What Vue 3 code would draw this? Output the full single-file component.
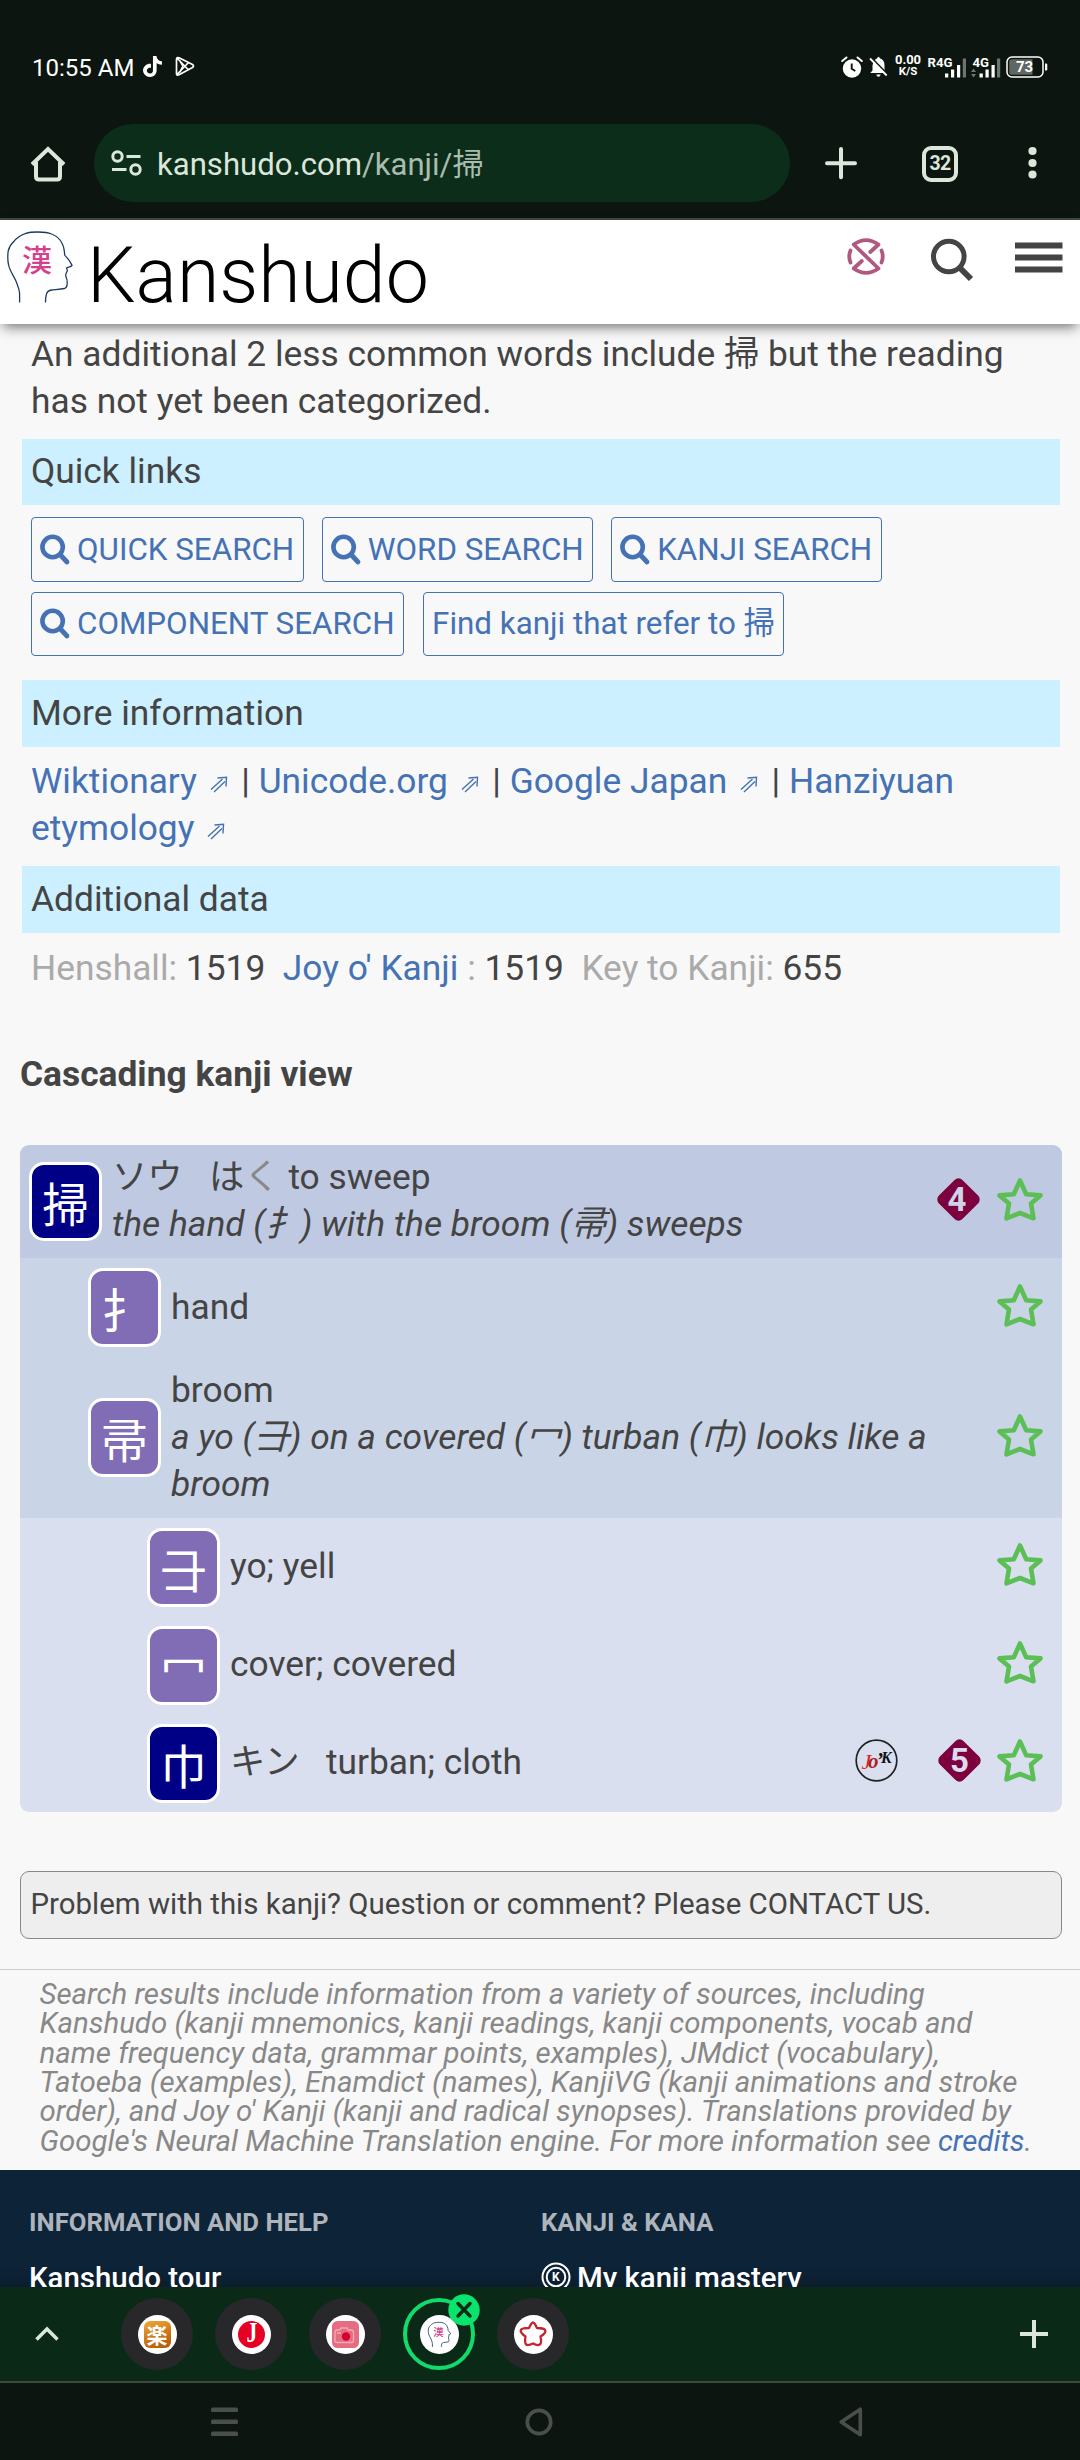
<script setup>
const searches = ['QUICK SEARCH', 'WORD SEARCH', 'KANJI SEARCH']
const refs = ['Wiktionary', 'Unicode.org', 'Google Japan']

const headPath =
  'M12.6 71.6V62C12 57 10 53 8.500 49C6 44 2.500 39 1.600 34C.4 29 .6 25 1.200 20C2.500 15 4 13 6.800 10.600C10 6 14 4 18.800 2.300C23 1 27 1 31 1C36 1 40 1 44.600 3C50 5 53 8 55 12.300C57 16 57.500 20 57.700 24C59 26 60.500 27 61.900 29C63 31 64 32 65 34.300C64 36 61 36 59.500 37C60 38 60.500 40 60 40.600C59 42 58.500 44 58.900 45.600C60 48 60.500 51 60 54C60 56 59 57 57.500 57.500C53 58.500 49 58.500 44.600 59C42 59.500 40 61 39.500 63C38.500 66 38.500 69 38.500 71.600'
const starPath =
  'M23 2.500L29.200 16.300L43.500 17.400L34 25.500L36.500 40.300L23 35L9.500 40.300L12 25.500L2.500 17.400L16.800 16.300Z'
</script>

<template>
  <div class="screen">
    <!-- system status bar -->
    <div class="status">
      <span class="clock">10:55 AM</span>
      <svg class="tiktok" width="19" height="21" viewBox="1.500 0 21 24" preserveAspectRatio="none"><path fill="#fff" d="M12.525.02c1.31-.02 2.61-.01 3.91-.02.08 1.53.63 3.09 1.75 4.17 1.12 1.11 2.7 1.62 4.24 1.79v4.03c-1.44-.05-2.89-.35-4.2-.97-.57-.26-1.1-.59-1.62-.93-.01 2.92.01 5.84-.02 8.75-.08 1.4-.54 2.79-1.35 3.94-1.31 1.92-3.58 3.17-5.91 3.21-1.43.08-2.86-.31-4.08-1.03-2.02-1.19-3.44-3.37-3.65-5.71-.02-.5-.03-1-.01-1.49.18-1.9 1.12-3.72 2.58-4.96 1.66-1.44 3.98-2.13 6.15-1.72.02 1.48-.04 2.96-.04 4.44-.99-.32-2.15-.23-3.02.37-.63.41-1.11 1.04-1.36 1.75-.21.51-.15 1.07-.14 1.61.24 1.64 1.82 3.02 3.5 2.87 1.12-.01 2.19-.66 2.77-1.61.19-.33.4-.67.41-1.06.1-1.79.06-3.57.07-5.36.01-4.03-.01-8.05.02-12.07z" /></svg>
      <svg class="play" width="20" height="21" viewBox="0 0 20 21" fill="none" stroke="#fff" stroke-width="1.700" stroke-linejoin="round"><path d="M1.500 3.500Q1.500 .8 4 1.800L17.500 8.500Q19.500 10 17.500 11.500L4 18.800Q1.500 19.800 1.500 17.500ZM2 2L13.500 14M2 18.500L13.500 6.500M8 10.200L5 5M8 10.200L5 16" /></svg>
      <span class="grow"></span>
      <svg width="22" height="22" viewBox="0 0 22 22"><circle cx="11" cy="12.500" r="9.200" fill="#fff" /><path d="M1.200 5L5.500 1.500M20.800 5L16.500 1.500" stroke="#fff" stroke-width="2" stroke-linecap="round" /><path d="M10.700 7.500V12.800L14.300 15" fill="none" stroke="#0c150f" stroke-width="1.900" /></svg>
      <svg class="bell" width="19" height="22" viewBox="0 0 19 22"><path d="M4.500 6Q6 2.800 8.300 2.200Q8.500 .7 9.500 .7T10.800 2.200Q15.500 3.500 15.500 9.500V14.500L17 17H1.200L3.500 14.500V9.500ZM7.300 18.500H11.700Q11.200 20.800 9.500 20.800T7.300 18.500" fill="#fff" /><path d="M2 1.500L18.500 18.500" stroke="#0c150f" stroke-width="2" /><path d="M1 2.500L17.700 19.500" stroke="#fff" stroke-width="1.800" /></svg>
      <span class="speed"><span>0.00</span><span class="unit">K/S</span></span>
      <svg class="sim1" width="39" height="22" viewBox="0 0 39 22"><text x="-.5" y="11" class="net">R4G</text><path fill="#fff" d="M17 17.500h3.300v4H17zM23 13.500h3.200v8H23zM29 9h3.200v12.500H29z" /><path fill="#6e746f" d="M34.800 2.500h3.200v19h-3.200z" /></svg>
      <svg class="sim2" width="30" height="22" viewBox="0 0 30 22"><text x="1.500" y="11" class="net">4G</text><path fill="#fff" d="M8.500 17.500h3.300v4H8.500zM14.500 13.500h3.200v8h-3.200zM20.500 9h3.200v12.500h-3.200z" /><path fill="#6e746f" d="M26 2.500h3.200v19H26zM0 16L2.500 12.500L5 16zM0 18L2.500 21.500L5 18z" /></svg>
      <svg class="battery" width="42" height="22" viewBox="0 0 42 22"><rect x="1" y="1" width="36" height="20" rx="5" fill="none" stroke="#fff" stroke-width="1.500" /><path d="M6 3.300h20.500v15.400H6q-2.800 0-2.800-2.800V6.100Q3.200 3.300 6 3.300" fill="#606661" /><path d="M39 7.500h1q1.300 0 1.300 1.300v4.400q0 1.300-1.300 1.300h-1z" fill="#fff" /><text x="10" y="16.200" class="pct">73</text></svg>
    </div>

    <!-- browser toolbar -->
    <div class="toolbar">
      <svg class="home" width="36" height="36" viewBox="0 0 36 36" fill="none" stroke="#dbe7da" stroke-width="4" stroke-linejoin="round"><path d="M2 18.500L18 3L34 18.500" stroke-linejoin="miter" /><path d="M6 16V30.500Q6 33.500 9 33.500H27Q30 33.500 30 30.500V16" /></svg>
      <div class="url">
        <svg width="31" height="26" viewBox="0 0 31 26" fill="none" stroke="#dbe7da" stroke-width="3"><circle cx="6.500" cy="6.500" r="4.700" /><circle cx="24.500" cy="19.500" r="4.700" /><path d="M15.500 6.500H29.500M1 19.500H15.500" /></svg>
        <span class="address">kanshudo.com<span class="path">/kanji/掃</span></span>
      </div>
      <svg class="new" width="32" height="32" viewBox="0 0 32 32" stroke="#dbe7da" stroke-width="4" stroke-linecap="round"><path d="M2 16.300H30M16 2V30.300" /></svg>
      <span class="count">32</span>
      <svg class="dots" width="9" height="34" viewBox="0 0 9 34" fill="#dbe7da"><circle cx="4.500" cy="5" r="4.100" /><circle cx="4.500" cy="17" r="4.100" /><circle cx="4.500" cy="28.500" r="4.100" /></svg>
    </div>

    <!-- web page -->
    <header class="site">
      <svg class="head" width="66" height="72" viewBox="0 0 66 72"><path :d="headPath" fill="none" stroke="#1f3a5f" stroke-width="1.300" /><text x="15" y="39.500" class="kan">漢</text></svg>
      <span class="brand">Kanshudo</span>
      <svg class="streak" width="38" height="37" viewBox="0 0 38 37" fill="none" stroke="#b0587f" stroke-width="3.800" stroke-linecap="round" stroke-linejoin="round"><path d="M23.300 14L31.500 6.500Q19-2.300 6.700 6.500L31.500 30.500Q19 39.300 6.700 30.500L14.800 23M3.500 12.500Q1 18.500 3.500 24.500M34.500 12.500Q37 18.500 34.500 24.500" /></svg>
      <svg class="find" width="43" height="44" viewBox="0 0 43 44" fill="none" stroke="#444"><circle cx="17.800" cy="18.500" r="15.300" stroke-width="5" /><path d="M29 30L40 41" stroke-width="6" /></svg>
      <svg class="burger" width="48" height="32" viewBox="0 0 48 32"><path d="M0 .5h47.500v6H0zM0 12.500h47.500v6H0zM0 24.500h47.500v6H0z" fill="#444" /></svg>
    </header>

    <main class="page">
      <p class="para">An additional 2 less common words include 掃 but the reading<br />has not yet been categorized.</p>

      <h3 class="band first">Quick links</h3>
      <div class="buttons">
        <a v-for="s in searches" :key="s" class="btn">
          <svg class="lens" width="30" height="31" viewBox="0 0 30 31" fill="none" stroke="#4472b5" stroke-linecap="round"><circle cx="12.600" cy="13" r="10.200" stroke-width="4.600" /><path d="M20.500 21L27 28" stroke-width="4.800" /></svg>{{ s }}
        </a>
      </div>
      <div class="buttons second">
        <a class="btn">
          <svg class="lens" width="30" height="31" viewBox="0 0 30 31" fill="none" stroke="#4472b5" stroke-linecap="round"><circle cx="12.600" cy="13" r="10.200" stroke-width="4.600" /><path d="M20.500 21L27 28" stroke-width="4.800" /></svg>COMPONENT SEARCH
        </a>
        <a class="btn">Find kanji that refer to 掃</a>
      </div>

      <h3 class="band more">More information</h3>
      <p class="para links"><template v-for="r in refs" :key="r"><a>{{ r }}<svg class="ext" width="18" height="17" viewBox="0 0 18 17" fill="none" stroke="#4472b5" stroke-width="1.400"><path d="M1 13.500L12.500 3M4 16L15 5.500M7.500 2L16.500 1.200L16 10.500" /></svg></a> | </template><a>Hanziyuan etymology<svg class="ext" width="18" height="17" viewBox="0 0 18 17" fill="none" stroke="#4472b5" stroke-width="1.400"><path d="M1 13.500L12.500 3M4 16L15 5.500M7.500 2L16.500 1.200L16 10.500" /></svg></a></p>

      <h3 class="band extra">Additional data</h3>
      <p class="para data"><i>Henshall:</i> 1519 &nbsp;<a>Joy o' Kanji</a> <i>:</i> 1519 &nbsp;<i>Key to Kanji:</i> 655</p>

      <h2 class="title">Cascading kanji view</h2>

      <section class="cascade">
        <div class="row l1">
          <span class="tile navy">掃</span>
          <div class="text">ソウ&nbsp;&nbsp; は<span class="okuri">く</span> to sweep<br /><em>the hand (扌) with the broom (帚) sweeps</em></div>
          <svg class="level" width="43" height="43" viewBox="0 0 43 43"><rect x="4.900" y="4.900" width="33.200" height="33.200" rx="5.500" transform="rotate(45 21.500 21.500)" fill="#7d003f" /><text x="20" y="33" text-anchor="middle" class="num n1">4</text></svg>
          <svg class="star" width="46" height="43" viewBox="0 0 46 43"><path :d="starPath" /></svg>
        </div>
        <div class="row l2">
          <span class="tile">扌</span>
          <div class="text">hand</div>
          <svg class="star" width="46" height="43" viewBox="0 0 46 43"><path :d="starPath" /></svg>
        </div>
        <div class="row l2 tall">
          <span class="tile">帚</span>
          <div class="text">broom<br /><em>a yo (⺕) on a covered (冖) turban (巾) looks like a<br />broom</em></div>
          <svg class="star" width="46" height="43" viewBox="0 0 46 43"><path :d="starPath" /></svg>
        </div>
        <div class="row l3">
          <span class="tile">⺕</span>
          <div class="text">yo; yell</div>
          <svg class="star" width="46" height="43" viewBox="0 0 46 43"><path :d="starPath" /></svg>
        </div>
        <div class="row l3">
          <span class="tile">冖</span>
          <div class="text">cover; covered</div>
          <svg class="star" width="46" height="43" viewBox="0 0 46 43"><path :d="starPath" /></svg>
        </div>
        <div class="row l3">
          <span class="tile navy">巾</span>
          <div class="text">キン&nbsp;&nbsp; turban; cloth</div>
          <svg class="jok" width="43" height="43" viewBox="0 0 43 43"><circle cx="21.500" cy="21.500" r="20.300" fill="none" stroke="#222" stroke-width="1.700" /><text x="6.500" y="30" class="j">J</text><text x="13" y="28.500" class="o">o</text><text x="21.500" y="28" class="a">’</text><text x="26" y="23.500" class="k">K</text></svg>
          <svg class="level" width="43" height="43" viewBox="0 0 43 43"><rect x="4.900" y="4.900" width="33.200" height="33.200" rx="5.500" transform="rotate(45 21.500 21.500)" fill="#7d003f" /><text x="21.500" y="33" text-anchor="middle" class="num n3">5</text></svg>
          <svg class="star" width="46" height="43" viewBox="0 0 46 43"><path :d="starPath" /></svg>
        </div>
      </section>

      <div class="contact">Problem with this kanji? Question or comment? Please CONTACT US.</div>

      <div class="credits">
        Search results include information from a variety of sources, including<br />
        Kanshudo (kanji mnemonics, kanji readings, kanji components, vocab and<br />
        name frequency data, grammar points, examples), JMdict (vocabulary),<br />
        Tatoeba (examples), Enamdict (names), KanjiVG (kanji animations and stroke<br />
        order), and Joy o' Kanji (kanji and radical synopses). Translations provided by<br />
        Google's Neural Machine Translation engine. For more information see <a>credits</a>.
      </div>
    </main>

    <footer class="foot">
      <div class="col"><h4>INFORMATION AND HELP</h4><a>Kanshudo tour</a></div>
      <div class="col"><h4>KANJI &amp; KANA</h4>
        <a><svg class="kring" width="30" height="30" viewBox="0 0 30 30" fill="none" stroke="#fff" stroke-width="2"><circle cx="15" cy="15" r="13.500" /><circle cx="15" cy="15" r="9.300" /><text x="11" y="19.300" class="kk">K</text></svg>My kanji mastery</a></div>
    </footer>

    <!-- tab group strip -->
    <div class="tabs">
      <svg class="chev" width="24" height="16" viewBox="0 0 24 16" fill="none" stroke="#dbe7da" stroke-width="3.500"><path d="M1.500 13.500L12 3L22.500 13.500" /></svg>
      <span class="tab"><span class="fav"><span class="raku">楽</span></span></span>
      <span class="tab"><span class="fav"><svg width="27" height="27" viewBox="0 0 27 27"><circle cx="13.500" cy="13.500" r="13.500" fill="#e60023" /><text class="jay" transform="translate(8.500 21) scale(.72 1)">J</text></svg></span></span>
      <span class="tab"><span class="fav"><svg width="27" height="27" viewBox="0 0 27 27"><rect width="27" height="27" rx="5.500" fill="#e56d82" /><path d="M5 9h2.500l1.500-2h6l1.500 2H19q2.500 0 2.500 2.500v8q0 2-2.500 2H5q-2 0-2-2v-8Q3 9 5 9M5 12h4" fill="none" stroke="#f4a9b4" stroke-width="1.300" /><circle cx="14" cy="15.500" r="4.200" fill="#d5002b" /></svg></span></span>
      <span class="tab active"><span class="fav"><svg width="23" height="25" viewBox="0 0 66 72"><path :d="headPath" fill="none" stroke="#33507a" stroke-width="2.600" /><text x="15" y="39.500" class="kan">漢</text></svg></span>
        <svg class="close" width="32" height="32" viewBox="0 0 32 32"><circle cx="16" cy="16" r="15.700" fill="#0be36f" /><path d="M10 9.500L22 22M22 9.500L10 22" stroke="#0a2a17" stroke-width="3.400" stroke-linecap="round" /></svg></span>
      <span class="tab"><span class="fav"><svg width="28" height="26" viewBox="0 0 28 26"><path d="M10 7Q12.500 1.500 14 1.500T18 7Q25.500 7 26.300 9.500T21.500 15.500Q23 22 20.800 23.500T14 22.500Q9 25 7.200 23.500T6.500 15.500Q1.500 12 1.700 9.500T10 7Z" fill="none" stroke="#c4242e" stroke-width="2.300" stroke-linejoin="round" /></svg></span></span>
      <span class="grow"></span>
      <svg class="add" width="28" height="28" viewBox="0 0 28 28" stroke="#dbe7da" stroke-width="4"><path d="M0 14H28M14 0V28" /></svg>
    </div>

    <!-- system navigation -->
    <nav class="nav">
      <svg width="27" height="30" viewBox="0 0 27 30" fill="#4b4f4b"><rect y=".5" width="27" height="4.600" rx="1.500" /><rect y="12.500" width="27" height="4.600" rx="1.500" /><rect y="24.500" width="27" height="4.600" rx="1.500" /></svg>
      <svg width="28" height="28" viewBox="0 0 28 28"><circle cx="14" cy="14" r="11.700" fill="none" stroke="#4b4f4b" stroke-width="3.700" /></svg>
      <svg width="24" height="30" viewBox="0 0 24 30"><path d="M2.200 15L21.300 2.200V27.800Z" fill="none" stroke="#4b4f4b" stroke-width="3.600" stroke-linejoin="round" /></svg>
    </nav>
  </div>
</template>

<style>
body { margin: 0; background: #0c150f; }
</style>

<style scoped>
.screen {
  width: 1080px; height: 2460px; overflow: hidden; display: flex; flex-direction: column;
  background: #f8f8f8; color: #444; font-family: Roboto, 'Noto Sans CJK JP', sans-serif; font-size: 35.35px;
}
.screen > * { flex: none; box-sizing: border-box; }
svg { display: block; flex: none; overflow: visible; }
.grow { flex: 1; }
a { color: #4472b5; }

.status { height: 124px; display: flex; align-items: flex-start; padding: 56px 32px 0 32px; background: #0c150f; color: #fff; }
.clock { font-size: 24px; line-height: 24px; width: 111px; white-space: nowrap; }
.play { margin-left: 13px; }
.bell { margin-left: 6px; }
.speed { display: flex; flex-direction: column; align-items: center; width: 26px; margin-left: 7px; font-size: 13px; font-weight: 700; line-height: 11.500px; margin-top: -2px; }
.speed .unit { font-size: 11.500px; }
.sim1 { margin-left: 7px; }
.sim2 { margin-left: 4px; }
.battery { margin-left: 5px; }
.net { font: 700 13.200px Roboto, sans-serif; fill: #fff; }
.pct { font: 700 15px Roboto, sans-serif; fill: #fff; }

.toolbar { height: 96px; display: flex; align-items: flex-start; background: #0c150f; border-bottom: 2px solid #3c4a3f; }
.home { margin: 22px 0 0 30px; }
.url { display: flex; align-items: center; width: 696px; height: 78px; border-radius: 39px; margin-left: 28px; padding-left: 17px; box-sizing: border-box; background: #0b2d1a; }
.address { color: #dbe7da; font-size: 31.100px; margin-left: 15px; line-height: 40px; padding-top: 3px; white-space: nowrap; }
.path { color: #a9bcad; }
.new { margin: 23px 0 0 35px; }
.count { width: 36px; height: 36px; box-sizing: border-box; margin: 22px 0 0 65px; border: 4px solid #dbe7da; border-radius: 9px; color: #dbe7da; font-size: 19.500px; letter-spacing: -.8px; font-weight: 700; line-height: 27px; text-align: center; }
.dots { margin: 22px 0 0 70px; }

.site { position: relative; z-index: 1; height: 104px; display: flex; align-items: flex-start; background: #fff; box-shadow: 0 6px 12px -3px rgba(0, 0, 0, .55); }
.head { margin: 11px 0 0 7px; }
.kan { font: 500 30px 'Noto Sans CJK JP', sans-serif; fill: #d63f8c; }
.brand { margin-left: 14px; margin-top: 11px; width: 760px; font-size: 77px; font-weight: 300; line-height: 90px; color: #000; }
.streak { margin-top: 18px; }
.find { margin: 18px 0 0 46px; }
.burger { margin: 22px 0 0 41px; }

.page { height: 1846px; display: flex; flex-direction: column; padding-top: 7px; box-sizing: border-box; }
.page > * { flex: none; }
.para { margin: 0 31px; line-height: 47px; white-space: nowrap; height: 94px; }
.links { white-space: normal; margin: 11px 31px 0; }
.data { height: 47px; margin-top: 12px; }
.data i { font-style: normal; color: #aaa; }
.ext { display: inline-block; margin: 0 4.800px 0 12.800px; vertical-align: 0; }
.band { margin: 0 20px 0 22px; height: 67px; line-height: 66px; padding-left: 9px; font-size: inherit; font-weight: 400; background: #ccf0ff; }
.band.first { margin-top: 14px; height: 66px; line-height: 65px; }
.band.more { margin-top: 24px; }
.band.extra { margin-top: 14px; }
.buttons { display: flex; margin: 12px 31px 0; }
.buttons.second { margin-top: 10px; }
.btn { display: flex; align-items: center; box-sizing: border-box; height: 65px; margin-right: 18px; padding: 0 8.500px 0 8px; border: 1px solid #4472b5; border-radius: 4px; font-size: 31.350px; line-height: 37px; white-space: nowrap; }
.second .btn { height: 64px; padding-bottom: 2px; margin-right: 19px; }
.lens { margin-right: 7px; }
.title { margin: 59px 20px 0; font-size: inherit; font-weight: 700; line-height: 47px; }

.cascade { margin: 47px 18px 0 20px; border-radius: 9px; overflow: hidden; }
.row { display: flex; align-items: center; position: relative; padding-right: 19px; height: 98px; background: #d9dfef; }
.l1 { height: 113px; padding-left: 9px; background: #bfcae2; }
.l2 { height: 99px; padding-left: 68px; background: #cad4e7; }
.l2.tall { height: 161px; }
.l3 { padding-left: 127px; }
.tile { width: 73px; height: 79px; box-sizing: border-box; border: 3px solid #fff; border-radius: 15px; background: #806db6; color: #fff; font: 400 46.500px/74px 'Noto Sans CJK JP', sans-serif; text-align: center; flex: none; }
.tile.navy { background: #000087; }
.text { flex: 1; padding: 0 0 1px 10px; line-height: 47px; white-space: nowrap; }
.okuri { color: #888; }
.star { margin-bottom: 5px; fill: none; stroke: #5bbf55; stroke-width: 4.600; stroke-linejoin: round; }
.level { margin: 0 16px 5px 0; }
.l1 .level { margin-right: 17px; }
.jok { margin: 0 40px 5px 0; }
.num { font: 700 33px Roboto, sans-serif; }
.n1 { fill: #cfd3e8; }
.n3 { fill: #dcdcee; }
.j { font: italic 22px 'Liberation Serif', serif; fill: #e01f1f; }
.o { font: italic 700 21px 'Liberation Serif', serif; fill: #a22; }
.a { font: italic 700 20px 'Liberation Serif', serif; fill: #111; }
.k { font: italic 700 16px 'Liberation Serif', serif; fill: #111; }

.contact { margin: 59px 18px 0 20px; height: 68px; box-sizing: border-box; padding-left: 9.500px; border: 1px solid #888; border-radius: 9px; background: #eee; font-size: 29.430px; line-height: 65px; white-space: nowrap; }
.credits { margin-top: 30px; border-top: 1px solid #ccc; padding: 10px 0 0 39.500px; font-size: 29.430px; font-style: italic; line-height: 29.330px; color: #888; white-space: nowrap; }

.foot { height: 117px; overflow: hidden; display: flex; padding-left: 29px; background: linear-gradient(to bottom, transparent 95px, rgba(0, 0, 0, .15)), #0d2337; }
.col { width: 512px; }
.col h4 { margin: 35px 0 0; font-size: 25.700px; font-weight: 700; line-height: 34px; color: #adb4bc; }
.col a { display: flex; align-items: center; margin-top: 22px; color: #fff; font-size: 29.450px; font-weight: 500; line-height: 34px; white-space: nowrap; }
.kring { margin: -2px 6px 0 0; }
.kk { font: 700 12px Roboto, sans-serif; fill: #fff; stroke: none; }

.tabs { height: 96px; display: flex; align-items: center; background: #0a2a17; border-bottom: 2px solid #3c4a3f; padding-right: 32px; }
.chev { margin: 0 62px 0 35px; }
.tab { position: relative; width: 72px; height: 72px; box-sizing: border-box; border-radius: 50%; margin-right: 22px; background: #28282b; display: flex; align-items: center; justify-content: center; flex: none; }
.tab.active { background: #0a2a17; border: 4px solid #10dc6e; }
.fav { width: 39px; height: 39px; border-radius: 50%; background: #fff; display: flex; align-items: center; justify-content: center; overflow: hidden; }
.raku { width: 27px; height: 27px; border-radius: 6px; background: linear-gradient(160deg, #f0a93a, #c4690f 70%, #b35c0c); color: #fff; font: 700 21px/27px 'Noto Sans CJK JP', sans-serif; text-align: center; }
.jay { font: 700 30px 'Liberation Serif', serif; fill: #fff; }
.close { position: absolute; right: -9px; top: -8px; }

.nav { height: 77px; display: flex; align-items: center; justify-content: space-between; padding: 0 217px 0 211px; background: #0c150f; }
</style>
